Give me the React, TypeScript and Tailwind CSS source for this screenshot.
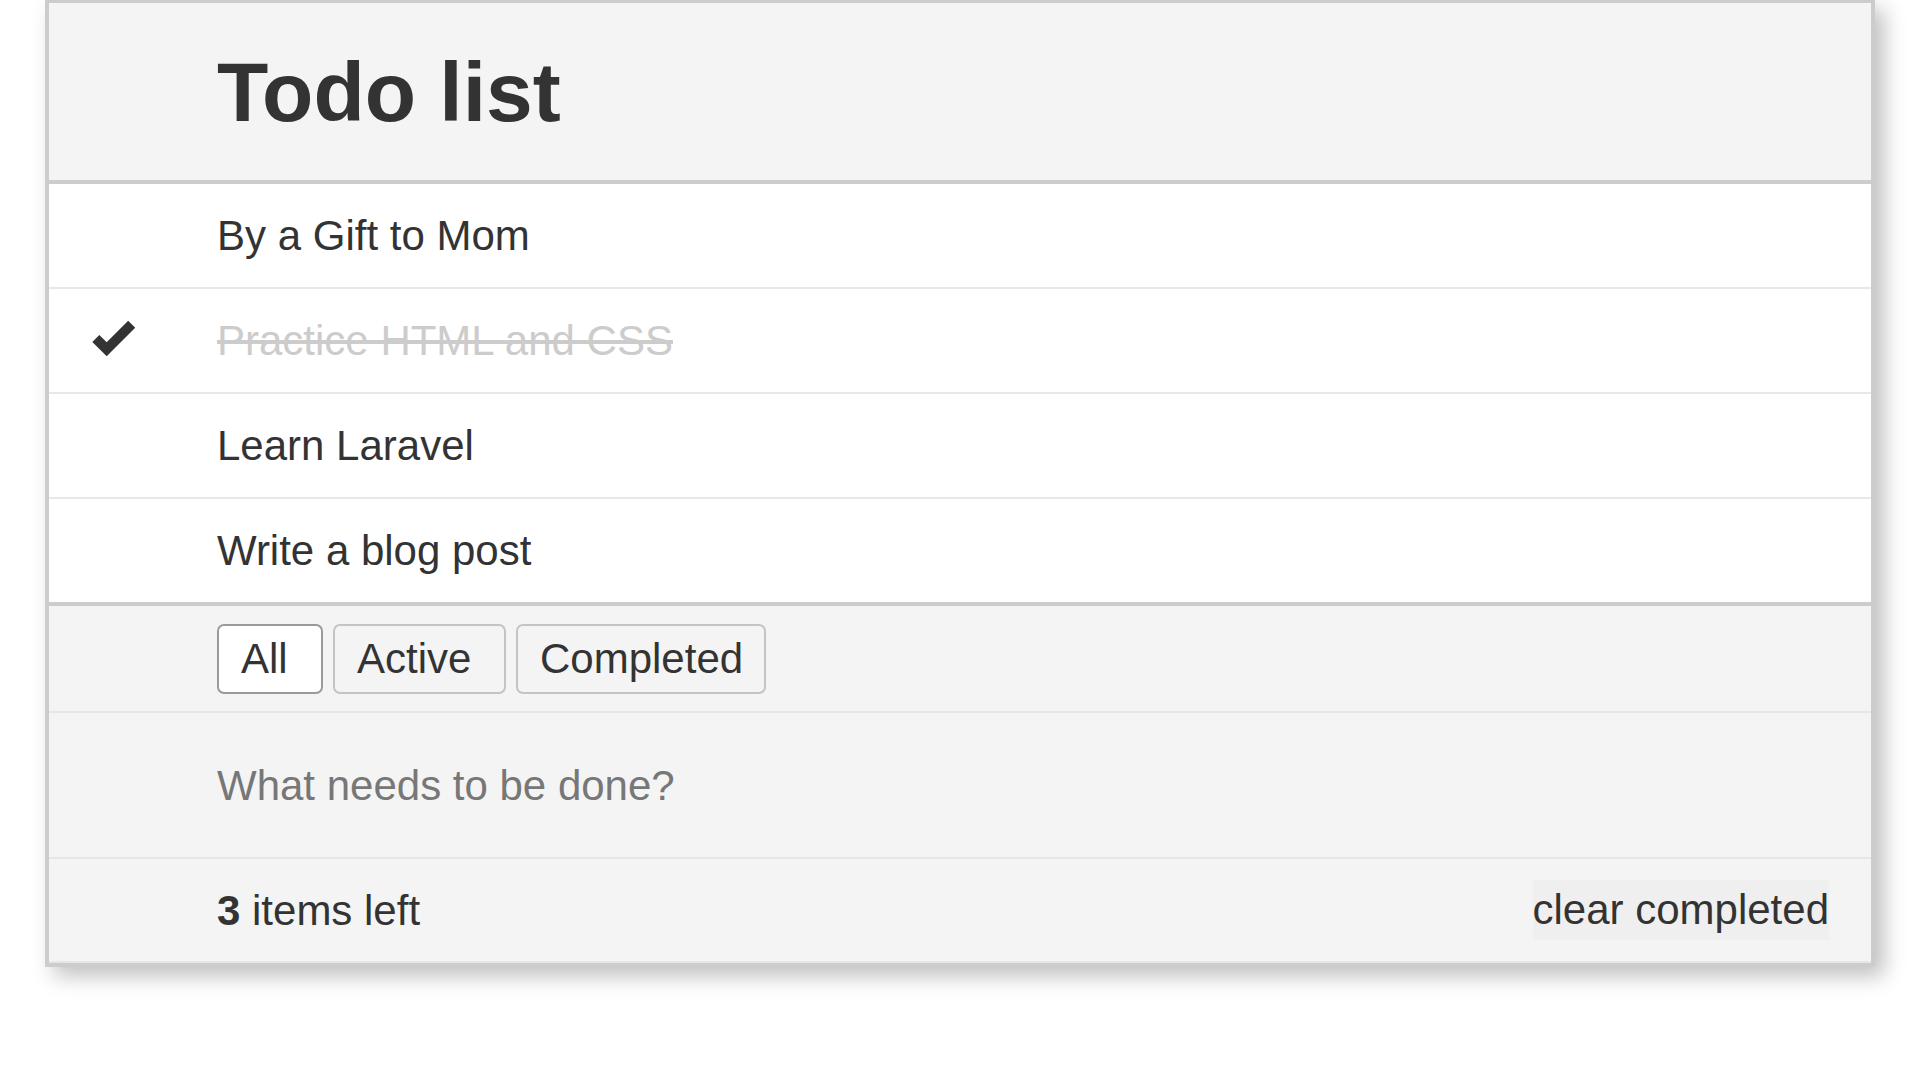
import { useState } from 'react';

interface Todo {
  id: number;
  text: string;
  done: boolean;
}

const INITIAL: Todo[] = [
  { id: 1, text: 'By a Gift to Mom', done: false },
  { id: 2, text: 'Practice HTML and CSS', done: true },
  { id: 3, text: 'Learn Laravel', done: false },
  { id: 4, text: 'Write a blog post', done: false },
];

type Filter = 'all' | 'active' | 'completed';

const FILTERS: { key: Filter; label: string; width: string }[] = [
  { key: 'all', label: 'All', width: 'w-[106px]' },
  { key: 'active', label: 'Active', width: 'w-[173px]' },
  { key: 'completed', label: 'Completed', width: 'w-[250px]' },
];

function Check() {
  return (
    <svg width="47" height="39" viewBox="0 0 47 39" className="relative -top-[2px]">
      <polyline
        points="5.8,19.5 16.7,30.3 41.7,5.3"
        fill="none"
        stroke="#333333"
        strokeWidth="10"
        strokeLinecap="butt"
        strokeLinejoin="miter"
      />
    </svg>
  );
}

export default function App() {
  const [todos, setTodos] = useState<Todo[]>(INITIAL);
  const [filter, setFilter] = useState<Filter>('all');
  const [draft, setDraft] = useState('');

  const visible = todos.filter((t) => (filter === 'all' ? true : filter === 'active' ? !t.done : t.done));
  const left = todos.filter((t) => !t.done).length;

  const toggle = (id: number) => setTodos((ts) => ts.map((t) => (t.id === id ? { ...t, done: !t.done } : t)));

  const add = () => {
    const text = draft.trim();
    if (!text) return;
    setTodos((ts) => [...ts, { id: Date.now(), text, done: false }]);
    setDraft('');
  };

  return (
    <div className="min-h-screen bg-white font-['Liberation_Sans',Arial,sans-serif] text-[#333333]">
      <div className="mx-[45px] border-x-4 border-t-[3px] border-b-4 border-[#cccccc] shadow-[9px_9px_20px_rgba(0,0,0,0.25)]">
        {/* Header */}
        <div className="h-[181px] flex items-center bg-[#f4f4f4] border-b-4 border-[#cccccc] pl-[168px]">
          <h1 className="text-[84px] font-bold leading-none">Todo list</h1>
        </div>

        {/* Items */}
        <ul className="bg-white">
          {visible.map((t, i) => (
            <li
              key={t.id}
              onClick={() => toggle(t.id)}
              className={`flex items-center cursor-pointer ${i < visible.length - 1 ? 'h-[105px] border-b-2 border-[#e8e8e8]' : 'h-[103px]'}`}
            >
              <div className="w-[168px] shrink-0 pl-[41px] flex items-center">{t.done && <Check />}</div>
              <span className={`text-[42px] ${t.done ? 'text-[#cccccc] line-through' : ''}`}>{t.text}</span>
            </li>
          ))}
        </ul>

        {/* Filters */}
        <div className="h-[111px] flex items-center gap-[10px] bg-[#f4f4f4] border-t-4 border-b-2 border-t-[#cccccc] border-b-[#e6e6e6] pl-[168px]">
          {FILTERS.map((f) => (
            <button
              key={f.key}
              onClick={() => setFilter(f.key)}
              className={`${f.width} h-[70px] rounded-[7px] border-2 pl-[22px] text-left text-[42px] ${
                filter === f.key ? 'bg-white border-[#9a9a9a]' : 'bg-[#f4f4f4] border-[#c4c4c4]'
              }`}
            >
              {f.label}
            </button>
          ))}
        </div>

        {/* New todo */}
        <div className="h-[146px] flex items-center bg-[#f4f4f4] border-b-2 border-[#e6e6e6] pl-[168px] pr-[42px]">
          <input
            value={draft}
            onChange={(e) => setDraft(e.target.value)}
            onKeyDown={(e) => e.key === 'Enter' && add()}
            placeholder="What needs to be done?"
            className="w-full bg-transparent text-[42px] text-[#333333] placeholder:text-[#777777] outline-none"
          />
        </div>

        {/* Footer */}
        <div className="h-[104px] flex items-center justify-between bg-[#f4f4f4] border-b-2 border-[#e6e6e6] pl-[168px] pr-[42px]">
          <span className="text-[42px]">
            <strong className="font-bold">{left}</strong> items left
          </span>
          <button
            onClick={() => setTodos((ts) => ts.filter((t) => !t.done))}
            className="h-[60px] bg-[#efefef] text-[42px] leading-none"
          >
            clear completed
          </button>
        </div>
      </div>
    </div>
  );
}
